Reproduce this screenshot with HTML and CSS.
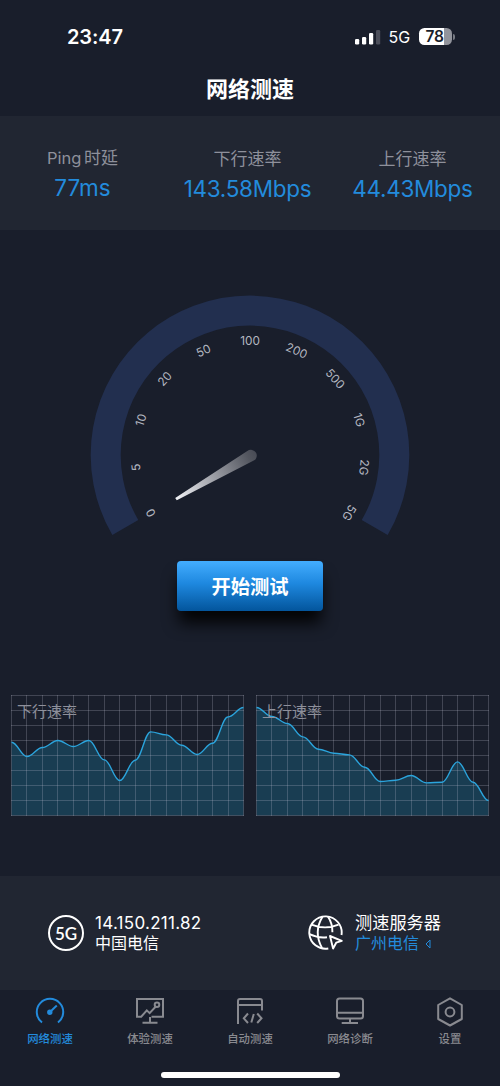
FILE: index.html
```html
<!DOCTYPE html>
<html lang="zh-CN">
<head>
<meta charset="utf-8">
<meta name="viewport" content="width=device-width, initial-scale=1">
<title>网络测速</title>
<link rel="stylesheet" href="styles.css">
</head>
<body>
<div class="app">
  <div class="status">
    <span class="time">23:47</span>
    <div class="status-right">
      <svg class="signal" width="26" height="16" viewBox="0 0 26 16" fill="#fff">
        <rect x="0" y="10" width="4.2" height="5.5" rx="1.2"/>
        <rect x="7" y="8" width="4.2" height="7.5" rx="1.2"/>
        <rect x="14" y="4" width="4.2" height="11.5" rx="1.2"/>
        <rect x="21" y="1" width="4.2" height="14.5" rx="1.2" fill="#4b4e5a"/>
      </svg>
      <span class="net">5G</span>
      <div class="battery"><span>78</span></div>
      <i class="battery-tip"></i>
    </div>
  </div>
  <h1 class="title">网络测速</h1>

  <div class="stats">
    <div class="stat ping"><span class="label"><b>Ping</b> 时延</span><span class="value">77ms</span></div>
    <div class="stat down"><span class="label">下行速率</span><span class="value">143.58Mbps</span></div>
    <div class="stat up"><span class="label">上行速率</span><span class="value">44.43Mbps</span></div>
  </div>

  <div class="meter">
    <svg class="gauge" width="320" height="250" viewBox="90 290 320 250">
      <defs>
        <linearGradient id="needle" gradientUnits="userSpaceOnUse" x1="176" y1="498" x2="256" y2="452">
          <stop offset="0" stop-color="#f0f1f5"/><stop offset=".45" stop-color="#a0a2a9"/><stop offset=".9" stop-color="#53565f"/><stop offset="1" stop-color="#484b55"/>
        </linearGradient>
      </defs>
      <path d="M125.3 527.5A144.3 144.3 0 1 1 374.7 527.5" fill="none" stroke="#222f4f" stroke-width="30"/>
      <g id="ticks" class="ticks"></g>
      <path d="M175.2 498.1L247.3 451.1A5.8 5.8 0 1 1 252.8 461.1L176.8 500.3Z" fill="url(#needle)"/>
    </svg>
    <button class="start">开始测试</button>
  </div>

  <div class="charts">
    <div class="chart"><svg width="233" height="121" viewBox="0 0 233 121" data-points="171,214,187,166,184,166,224,286,225,140,149,180,208,174,95,67"></svg><span>下行速率</span></div>
    <div class="chart"><svg width="233" height="121" viewBox="0 0 233 121" data-points="67,94,115,155,192,204,209,246,289,285,271,293,291,230,291,346"></svg><span>上行速率</span></div>
  </div>

  <div class="info">
    <div class="network">
      <div class="badge">5G</div>
      <div class="lines"><span class="ip">14.150.211.82</span><span class="isp">中国电信</span></div>
    </div>
    <div class="server">
      <svg width="36" height="36" viewBox="0 0 36 36" fill="none" stroke="#fff" stroke-width="1.9">
        <path d="M20.3 33.5A16.2 16.2 0 1 1 33.5 20"/>
        <path d="M14.5 1.8Q5.2 17 14 33M20 1.8Q24.5 8.2 24.4 17.3M3.5 9.6Q17 15.2 30.6 9.6M1.5 19.2Q11 23.6 19 22.2"/>
        <path d="M22 21L33.8 25.8L28.2 27.7L25.1 33.5Z" stroke-linejoin="round"/>
      </svg>
      <div class="lines"><span class="server-title">测速服务器</span><span class="server-name">广州电信<svg width="6" height="10" viewBox="0 0 6 10" fill="none" stroke="#238bdc"><path d="M5 1L1 5L5 9Z"/></svg></span></div>
    </div>
  </div>

  <nav class="tabs">
    <a class="tab active">
      <svg width="30" height="30" viewBox="0 0 30 30"><path d="M7 25.5A13.2 13.2 0 1 1 23 25.5"/><path d="M15 15L21.8 8.6"/><circle cx="14.8" cy="15.3" r="1.7" fill="currentColor"/></svg>
      <span>网络测速</span>
    </a>
    <a class="tab">
      <svg width="30" height="30" viewBox="0 0 30 30"><path d="M16.5 19.7H28V2H2V19.7H6.2L11.8 13.4L14.6 16.1L20.8 9.5M15 20V25.2M7.5 25.7H22.5"/><circle cx="22" cy="7.7" r="2.3"/></svg>
      <span>体验测速</span>
    </a>
    <a class="tab">
      <svg width="30" height="30" viewBox="0 0 30 30"><path d="M3 27V4Q3 2 5 2H25Q27 2 27 4V13.5M3 8H27M13 16.5L8.8 21.3L13 26M22.2 16.5L26.5 21.3L22.2 26M18.8 17L16.3 25.5"/></svg>
      <span>自动测速</span>
    </a>
    <a class="tab">
      <svg width="30" height="30" viewBox="0 0 30 30"><rect x="2" y="1.5" width="26" height="20" rx="2.5"/><path d="M2 15.7H28M15 21.5V25.5M6.7 26H23"/></svg>
      <span>网络诊断</span>
    </a>
    <a class="tab">
      <svg width="30" height="30" viewBox="0 0 30 30"><path d="M15 1.3L26.8 8V22L15 28.5L3.2 22V8Z" stroke-linejoin="round"/><circle cx="15" cy="15" r="4.4"/></svg>
      <span>设置</span>
    </a>
  </nav>
  <div class="home"></div>
</div>
<script src="script.js"></script>
</body>
</html>
```

FILE: styles.css
```css
* { box-sizing: border-box; }

body {
  margin: 0;
  background: #191e2b;
  color: #fff;
  font-family: Inter, "Noto Sans CJK SC", sans-serif;
}

.app {
  width: 500px;
  height: 1086px;
  display: flex;
  flex-direction: column;
  overflow: hidden;
}

.status {
  height: 70px;
  padding: 4px 45.5px 0 67px;
  display: flex;
  justify-content: space-between;
  align-items: center;
}

.time { font-size: 20px; font-weight: 600; letter-spacing: -.1px; }
.status-right { display: flex; align-items: center; }
.signal { margin-top: -1px; }
.net { font-size: 16px; letter-spacing: .2px; margin: 0 8px 0 7px; }

.battery {
  width: 33px;
  height: 17px;
  border-radius: 5.5px;
  background: linear-gradient(90deg, #fff 77%, #92949c 77%);
  color: #191e2b;
  font-size: 15.5px;
  font-weight: 600;
  line-height: 17px;
  text-align: center;
  margin-top: -1px;
  letter-spacing: -.4px;
}
.battery span { margin-left: -1px; }
.battery-tip { width: 2px; height: 6px; margin-left: 1px; border-radius: 0 2px 2px 0; background: #777a83; }

.title {
  margin: 0;
  height: 46px;
  text-align: center;
  font-size: 22px;
  line-height: 38px;
  font-weight: 700;
}

.stats {
  height: 114px;
  padding-top: 31px;
  background: #212632;
  display: grid;
  grid-template-columns: 165px 165px 165px;
}
.stat { display: flex; flex-direction: column; align-items: center; white-space: nowrap; }
.label { font-size: 17px; line-height: 25px; height: 25px; color: #8e909b; }
.label b { font-weight: 400; font-size: 16.5px; margin-right: -2px; }
.value { font-size: 22.5px; line-height: 30px; margin-top: 1.5px; letter-spacing: -.3px; color: #238bdc; }
.ping { margin-top: -1px; }
.ping .value { letter-spacing: 0; }

.meter {
  height: 465px;
  padding-top: 60px;
  display: flex;
  flex-direction: column;
  align-items: center;
}
.gauge { flex: none; }
.ticks { fill: #b4b7c0; font-size: 11.8px; text-anchor: middle; }

.start {
  width: 146px;
  height: 50px;
  margin-top: 21px;
  padding: 0;
  border: 0;
  border-radius: 4px;
  background: linear-gradient(#43adff, #1e88df 45%, #03559c);
  box-shadow: 0 14px 16px -2px rgba(0, 0, 0, .9);
  color: #fff;
  font: 600 19.3px/52px Inter, "Noto Sans CJK SC", sans-serif;
}

.charts {
  height: 181px;
  padding: 0 11px;
  display: flex;
  justify-content: space-between;
}
.chart { position: relative; width: 233px; height: 121px; }
.chart svg { display: block; }
.chart span {
  position: absolute;
  left: 6px;
  top: 6px;
  font-size: 15px;
  line-height: 22px;
  color: #8e909b;
}
.grid { fill: none; stroke: #c8c8d7; stroke-opacity: .23; stroke-width: 1; }
.area { fill: #1b6482; fill-opacity: .45; }
.curve { fill: none; stroke: #2ba4dc; stroke-width: 1.4; }

.info {
  height: 114px;
  padding: 0 59px 0 48px;
  background: #212632;
  display: flex;
  justify-content: space-between;
  align-items: center;
}
.network, .server { display: flex; align-items: center; }
.lines { display: flex; flex-direction: column; line-height: 20px; }
.badge {
  width: 36px;
  height: 36px;
  margin-right: 11px;
  border: 2px solid #fff;
  border-radius: 50%;
  font: 600 17px/33px Lato, sans-serif;
  text-align: center;
}
.ip { font-size: 17px; letter-spacing: .28px; }
.isp { font-size: 16px; }
.server svg { flex: none; }
.server .lines { margin-left: 11px; }
.server-title { font-size: 17.2px; }
.server-name { font-size: 16px; color: #238bdc; }
.server-name svg { margin-left: 6px; }

.tabs {
  height: 96px;
  flex: none;
  padding-top: 7px;
  display: grid;
  grid-template-columns: repeat(5, 1fr);
}
.tab { display: flex; flex-direction: column; align-items: center; color: #898a90; }
.tab svg { fill: none; stroke: currentColor; stroke-width: 2; }
.tab span { font-size: 11.4px; line-height: 16px; margin-top: 4px; font-weight: 500; }
.tab.active { color: #238bdc; }

.home {
  position: absolute;
  left: 161px;
  top: 1072px;
  width: 179px;
  height: 6px;
  border-radius: 3px;
  background: #fff;
}
```

FILE: script.js
```js
const NS = "http://www.w3.org/2000/svg";

function add(parent, tag, attrs, text) {
  const el = document.createElementNS(NS, tag);
  for (const key in attrs) el.setAttribute(key, attrs[key]);
  if (text) el.textContent = text;
  parent.appendChild(el);
}

// Scale labels, 24 degrees apart around the dial centre.
["0", "5", "10", "20", "50", "100", "200", "500", "1G", "2G", "5G"].forEach((label, i) => {
  add(document.getElementById("ticks"), "text", {
    x: 250, y: 345, transform: `rotate(${-120 + i * 24} 250 455.5)`
  }, label);
});

document.querySelectorAll("svg[data-points]").forEach(svg => {
  const points = svg.dataset.points.split(",").map((y, i) => [0.5 + i * 232 / 15, (y - 30) / 3 + 0.2]);
  let line = `M${points[0]}`;
  for (let i = 1; i < points.length; i++) {
    const [x0, y0] = points[i - 1], [x1, y1] = points[i];
    line += `C${x0 + 6},${y0} ${x1 - 6},${y1} ${x1},${y1}`;
  }
  add(svg, "path", { class: "area", d: line + "V120.5H0.5Z" });
  let grid = "";
  for (let i = 0; i <= 15; i++) grid += `M${Math.round(i * 232 / 15) + 0.5} 0V121`;
  for (let i = 0; i <= 8; i++) grid += `M0 ${i * 15 + 0.5}H233`;
  add(svg, "path", { class: "grid", d: grid });
  add(svg, "path", { class: "curve", d: line });
});
```
